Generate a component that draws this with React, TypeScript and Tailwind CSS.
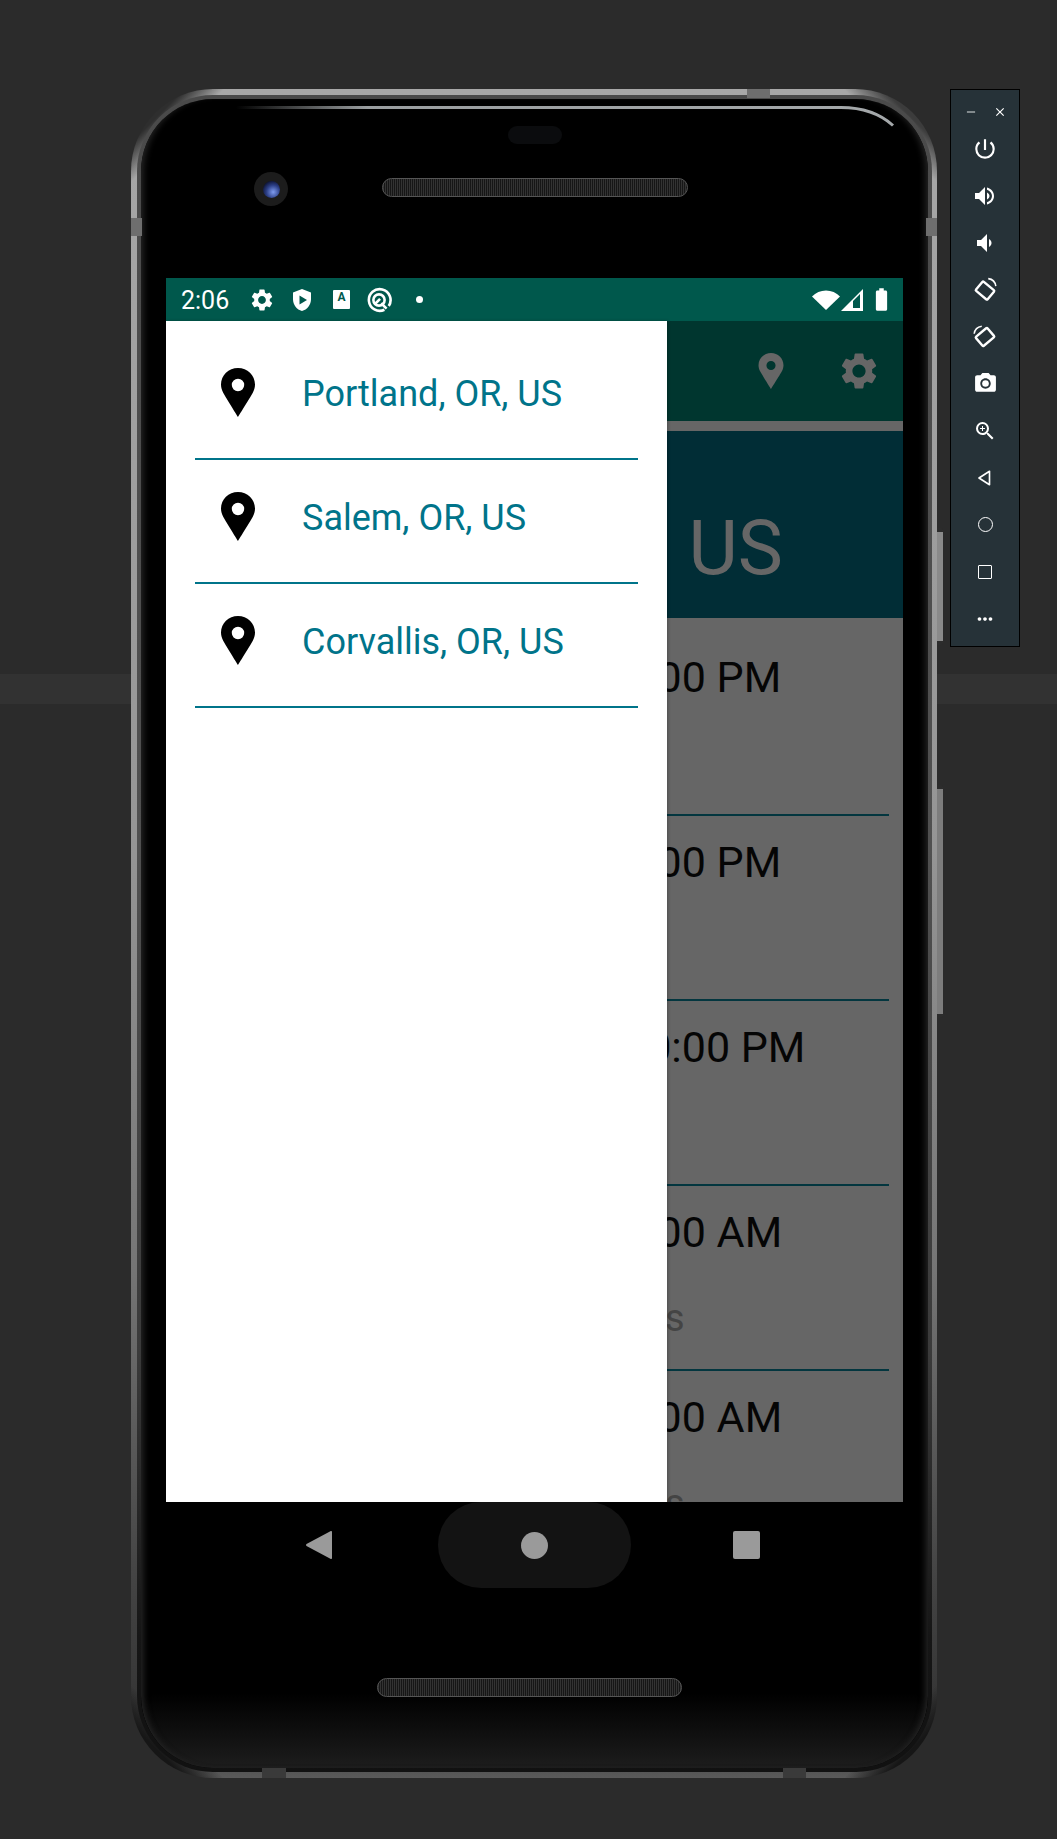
import { MdSettings, MdPowerSettingsNew, MdPhotoCamera, MdZoomIn, MdBatteryStd, MdMoreHoriz, MdClose, MdRemove } from 'react-icons/md';

const roboto = "font-['Roboto',sans-serif]";

const forecast = [
  { time: '4:00 PM', sky: 'clear sky', pad: 'h-[198px] pt-[34px]' },
  { time: '7:00 PM', sky: 'clear sky', pad: 'h-[185px] pt-[21px]' },
  { time: '10:00 PM', sky: 'clear sky', pad: 'h-[185px] pt-[21px]' },
  { time: '1:00 AM', sky: 'few clouds', pad: 'h-[185px] pt-[21px]' },
  { time: '4:00 AM', sky: 'few clouds', pad: 'h-[185px] pt-[21px]' },
];

const cities = ['Portland, OR, US', 'Salem, OR, US', 'Corvallis, OR, US'];

function Pin({ className }: { className: string }) {
  return (
    <svg viewBox="0 0 34 49" className={className} fill="currentColor">
      <path
        fillRule="evenodd"
        d="M17 0C7.6 0 0 7.4 0 16.6c0 3 .9 5.8 2.2 8.2C5.5 30.8 17 49 17 49s11.5-18.2 14.8-24.2c1.3-2.4 2.2-5.2 2.2-8.2C34 7.4 26.4 0 17 0zm0 10.8a6.2 6.2 0 1 1 0 12.4 6.2 6.2 0 0 1 0-12.4z"
      />
    </svg>
  );
}

function StatusBar() {
  return (
    <div className={`flex h-[43px] items-center bg-[#00584c] pl-[15px] pr-[14px] text-white ${roboto}`}>
      <span className="w-[67px] pt-[1px] text-[25px] leading-none">2:06</span>
      <MdSettings className="ml-[1px] h-[26px] w-[26px]" />
      <svg viewBox="0 0 24 24" className="ml-[15px] h-[24px] w-[24px]" fill="currentColor">
        <path
          fillRule="evenodd"
          d="M12 1 3 4.6v6.600c0 5.500 3.800 10.400 9 11.800 5.200-1.400 9-6.300 9-11.800V4.600L12 1zM9.500 7.500l7.500 4.500-7.500 4.500v-9z"
        />
      </svg>
      <div className="ml-[19px] flex h-[19px] w-[17px] items-start justify-center rounded-[1px] bg-white text-[12px] font-bold leading-[15px] text-[#00584c]">
        A
      </div>
      <svg viewBox="0 0 24 24" className="ml-[16px] h-[26px] w-[26px]" fill="none" stroke="currentColor" strokeWidth="2.400">
        <path d="M17 21a10 10 0 1 1 4-3.500" />
        <circle cx="12" cy="12" r="5.200" />
        <path d="M8.500 15.500 13 11M14 15l5 5" />
      </svg>
      <div className="ml-[24px] h-[7px] w-[7px] rounded-full bg-white" />
      <div className="flex-1" />
      <svg viewBox="0 0 26 20" className="mr-[1px] h-[20px] w-[28px]" fill="currentColor" preserveAspectRatio="none">
        <path d="M13 20 0 6.500C3.500 2.500 8 .500 13 .500s9.500 2 13 6L13 20z" />
      </svg>
      <svg viewBox="0 0 22 22" className="h-[22px] w-[22px]" fill="currentColor">
        <path fillRule="evenodd" d="M0 22 22 0v22H0zm12-3h7V5l-7 7v7z" />
      </svg>
      <MdBatteryStd className="ml-[5px] h-[27px] w-[27px] -mr-[6px]" />
    </div>
  );
}

function Backdrop() {
  return (
    <div className={`flex h-[1181px] flex-col overflow-hidden ${roboto}`}>
      <div className="flex h-[100px] shrink-0 items-center justify-end bg-[#00362f] pr-[22px] text-[#666666]">
        <Pin className="h-[36px] w-[26px]" />
        <MdSettings className="ml-[53px] h-[44px] w-[44px]" />
      </div>
      <div className="h-[10px] shrink-0 bg-[#666666]" />
      <div className="flex h-[187px] shrink-0 items-center justify-end whitespace-nowrap bg-[#012d36] pr-[120px] pt-[46px] text-[76px] leading-none text-[#666666]">
        Portland, OR, US
      </div>
      <div className="flex-1 bg-[#666666] pr-[14px]">
        {forecast.map((row) => (
          <div key={row.time} className={`flex shrink-0 flex-col border-b-2 border-[#03363f] pl-[457px] ${row.pad}`}>
            <div className="text-[43px] leading-[50px] text-[#050505]">{row.time}</div>
            <div className="ml-[-122px] mt-[39px] text-[38px] leading-[44px] text-[#444444]">{row.sky}</div>
          </div>
        ))}
      </div>
    </div>
  );
}

function Drawer() {
  return (
    <div className={`absolute bottom-0 left-0 top-[43px] w-[501px] bg-white px-[29px] pt-[15px] shadow-[1px_0_3px_rgba(0,0,0,0.25)] ${roboto}`}>
      {cities.map((city) => (
        <div key={city} className="flex h-[124px] items-center border-b-2 border-[#00748a] pb-[6px] pl-[26px]">
          <Pin className="mb-[4px] h-[49px] w-[34px] shrink-0 text-black" />
          <span className="ml-[47px] text-[36px] leading-none text-[#00748a]">{city}</span>
        </div>
      ))}
    </div>
  );
}

function EmulatorBar() {
  const slot = 'flex h-[47px] items-center justify-center';
  return (
    <aside className="flex h-[558px] w-[70px] flex-col border border-black bg-[#263238] pt-[12px] text-white">
      <div className="flex h-[20px] items-center justify-center gap-[15px] text-[#c4cacc]">
        <MdRemove className="h-[14px] w-[14px]" />
        <MdClose className="h-[14px] w-[14px] text-white" />
      </div>
      <div className={`${slot} mt-[3px]`}>
        <MdPowerSettingsNew className="h-[26px] w-[26px]" />
      </div>
      <div className={slot}>
        <svg viewBox="0 0 24 24" className="h-[24px] w-[24px]" fill="currentColor">
          <path d="M2 9v6h4l6 6V3L6 9H2z" />
          <path d="M14 8.500c1.500.8 2.500 2 2.500 3.500s-1 2.700-2.500 3.500v-7z" />
          <path d="M14 3.500v2.200c2.900.9 5 3.400 5 6.300s-2.100 5.400-5 6.300v2.200c4-.9 7-4.400 7-8.500s-3-7.600-7-8.500z" />
        </svg>
      </div>
      <div className={slot}>
        <svg viewBox="0 0 24 24" className="h-[24px] w-[24px]" fill="currentColor">
          <path d="M4 9v6h4l6 6V3L8 9H4z" />
          <path d="M16 8v8c1.500-.8 2.500-2.300 2.500-4S17.500 8.800 16 8z" />
        </svg>
      </div>
      <div className={slot}>
        <svg viewBox="0 0 24 24" className="h-[26px] w-[26px]" fill="none" stroke="currentColor" strokeWidth="2.200" strokeLinejoin="round">
          <rect x="5" y="7" width="14" height="11" rx="1" transform="rotate(40 12 12.500)" />
          <path d="M15 1.500c3.800.5 6.500 3.300 7 7" strokeWidth="1.400" />
        </svg>
      </div>
      <div className={slot}>
        <svg viewBox="0 0 24 24" className="h-[26px] w-[26px]" fill="none" stroke="currentColor" strokeWidth="2.200" strokeLinejoin="round">
          <rect x="5" y="6.500" width="14" height="11" rx="1" transform="rotate(-40 12 12)" />
          <path d="M2 9c.5-3.800 3.300-6.500 7-7" strokeWidth="1.400" />
        </svg>
      </div>
      <div className={slot}>
        <MdPhotoCamera className="h-[25px] w-[25px]" />
      </div>
      <div className={slot}>
        <MdZoomIn className="h-[24px] w-[24px]" />
      </div>
      <div className={slot}>
        <svg viewBox="0 0 24 24" className="h-[18px] w-[18px]" fill="none" stroke="currentColor" strokeWidth="2.200" strokeLinejoin="round">
          <path d="M18 3v18L4 12 18 3z" />
        </svg>
      </div>
      <div className={slot}>
        <div className="h-[15px] w-[15px] rounded-full border-[1.5px] border-white" />
      </div>
      <div className={slot}>
        <div className="h-[14px] w-[14px] rounded-[1px] border-[1.5px] border-white" />
      </div>
      <div className={slot}>
        <MdMoreHoriz className="h-[22px] w-[22px]" />
      </div>
    </aside>
  );
}

function Speaker({ className }: { className: string }) {
  return (
    <div
      className={`h-[19px] rounded-full border border-[#555555] bg-[repeating-linear-gradient(90deg,#333333_0,#333333_1px,#161616_1px,#161616_2px)] ${className}`}
    />
  );
}

function Phone() {
  return (
    <div className="relative h-[1689px] w-[806px] shrink-0 rounded-[82px] bg-[linear-gradient(135deg,#2e2e2e_0,#2e2e2e_38px,transparent_66px),linear-gradient(225deg,#3c3c3c_0,#3c3c3c_38px,transparent_66px),linear-gradient(45deg,#161616_0,#161616_38px,transparent_66px),linear-gradient(315deg,#161616_0,#161616_38px,transparent_66px),linear-gradient(180deg,#a8a8a8_0%,#959595_45%,#757575_70%,#444444_88%,#333333_97%,#5a5a5a_100%)] p-[6px] pr-[5px]">
      <div className="h-full rounded-[76px] bg-[linear-gradient(180deg,#4a4a4a_0%,#505050_45%,#3a3a3a_75%,#161616_92%,#111111_100%)] p-[4px]">
        <div className="relative flex h-full flex-col overflow-hidden rounded-[72px] bg-black">
          <div className="flex h-[179px] flex-col items-center">
            <div className="mt-[27px] h-[18px] w-[54px] rounded-full bg-[#0b0c0e]" />
            <div className="mt-[28px] flex w-full items-center pl-[113px]">
              <div className="flex h-[34px] w-[34px] items-center justify-center rounded-full bg-[#1c1c1c]">
                <div className="h-[17px] w-[17px] rounded-full bg-[radial-gradient(circle_at_60%_65%,#7f9cf0_0,#2c3f86_45%,#0a0f2a_80%)]" />
              </div>
              <Speaker className="mb-[3px] ml-[94px] w-[306px]" />
            </div>
          </div>
          <div className="relative ml-[25px] h-[1224px] w-[737px] overflow-hidden">
            <StatusBar />
            <Backdrop />
            <Drawer />
          </div>
          <div className="relative flex flex-1 flex-col items-center bg-[linear-gradient(180deg,#000_0%,#000_72%,#1d1d1d_100%)]">
            <div className="flex h-[86px] w-full items-center">
              <svg viewBox="0 0 26 28" className="ml-[165px] h-[28px] w-[26px]" fill="#9a9a9a">
                <path d="M25 0c.6 0 1 .4 1 1v26c0 .6-.4 1-1 1-.2 0-.400 0-.600-.200L.500 15c-.6-.5-.6-1.500 0-2L24.400.200c.2-.2.400-.2.600-.2z" />
              </svg>
              <div className="ml-[106px] flex h-[86px] w-[193px] items-center justify-center rounded-[43px] bg-[#131313]">
                <div className="h-[27px] w-[27px] rounded-full bg-[#9a9a9a]" />
              </div>
              <div className="ml-[102px] h-[28px] w-[27px] rounded-[2px] bg-[#9a9a9a]" />
            </div>
            <Speaker className="ml-[-10px] mt-[90px] w-[305px]" />
          </div>
          <svg viewBox="0 0 787 40" className="absolute left-0 top-0 h-[40px] w-[787px]" fill="none">
            <defs>
              <linearGradient id="rim" x1="0" x2="1" y1="0" y2="0">
                <stop offset="0" stopColor="#9a9ea0" stopOpacity="0" />
                <stop offset="0.2" stopColor="#9a9ea0" />
                <stop offset="1" stopColor="#a4a8aa" />
              </linearGradient>
            </defs>
            <path d="M95 8.500H700c22 0 40 7 52 18" stroke="url(#rim)" strokeWidth="3" />
          </svg>
          <div className="pointer-events-none absolute inset-0 rounded-[72px] shadow-[inset_7px_0_7px_-5px_#2a2a2a,inset_-7px_0_7px_-5px_#2a2a2a]" />
        </div>
      </div>
      <div className="absolute left-[616px] top-0 h-[9px] w-[23px] bg-[#6e6e6e]" />
      <div className="absolute left-0 top-[129px] h-[18px] w-[11px] bg-[#6e6e6e]" />
      <div className="absolute right-0 top-[129px] h-[18px] w-[11px] bg-[#6e6e6e]" />
      <div className="absolute bottom-0 left-[131px] h-[10px] w-[24px] bg-[#3a3a3a]" />
      <div className="absolute bottom-0 left-[652px] h-[10px] w-[23px] bg-[#3a3a3a]" />
      <div className="absolute -right-[6px] top-[439px] h-[117px] w-[6px] rounded-r-[3px] border-y-4 border-[#2c2c2c] bg-[#8a8a8a]" />
      <div className="absolute -right-[6px] top-[696px] h-[233px] w-[6px] rounded-r-[3px] border-y-4 border-[#2c2c2c] bg-[#7d7d7d]" />
    </div>
  );
}

export default function App() {
  return (
    <div className="relative h-[1839px] w-full overflow-hidden bg-[#2b2b2b]">
      <div className="absolute inset-x-0 top-[674px] h-[30px] bg-[#323232]" />
      <div className="relative flex items-start gap-[13px] pl-[131px] pt-[89px]">
        <Phone />
        <EmulatorBar />
      </div>
    </div>
  );
}
